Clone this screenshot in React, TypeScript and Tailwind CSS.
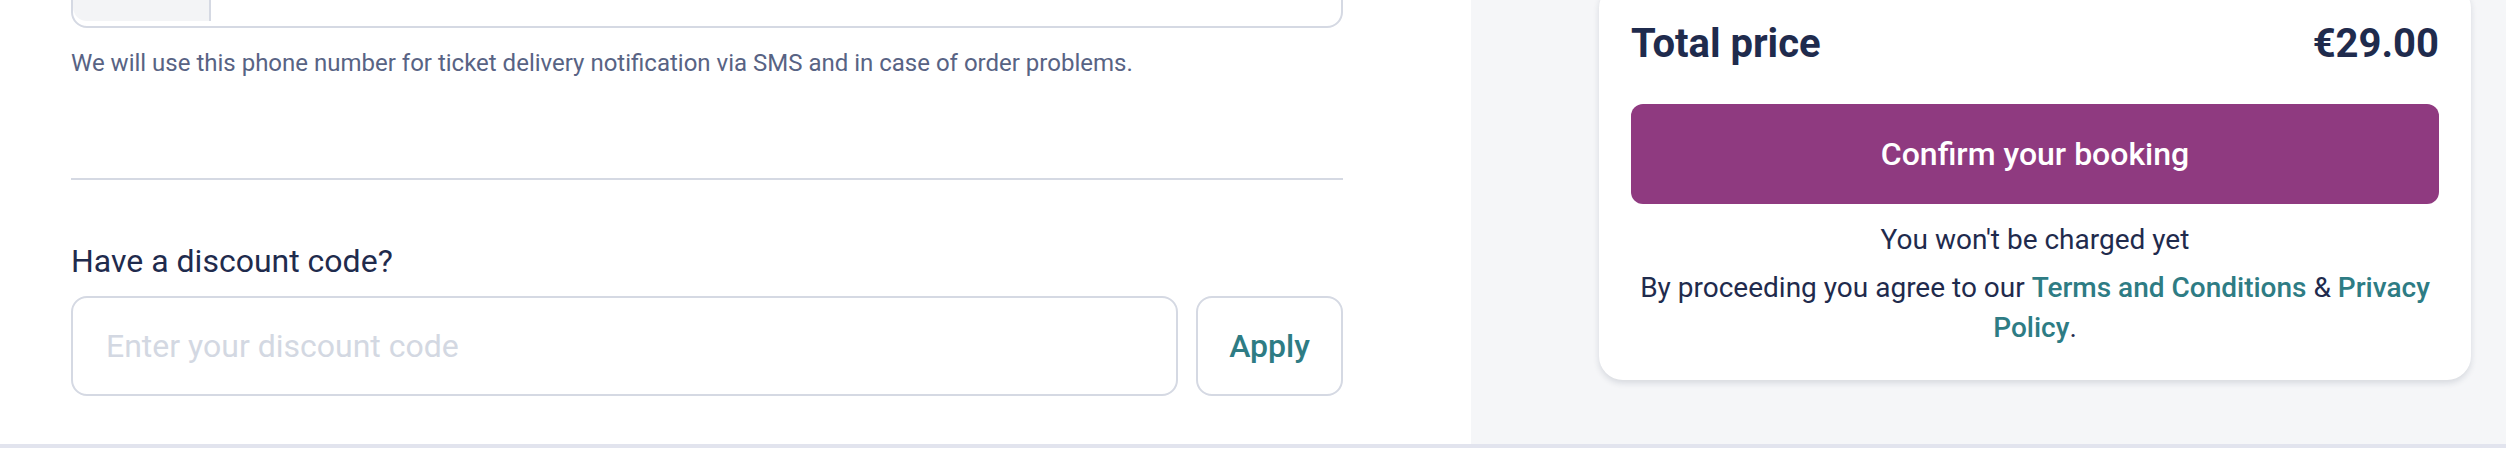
const App = () => {
  return (
    <div className="h-[468px] w-[2506px] overflow-hidden bg-white font-['Roboto',sans-serif]">
      <div className="-mt-[72px] flex border-b-4 border-[#e2e4ee]">
        {/* Left: form */}
        <div className="w-[1471px] shrink-0 pb-[48px] pl-[71px] pr-[128px]">
          {/* Phone input (cut off at top) */}
          <div className="flex h-[100px] rounded-[16px] border-2 border-[#d5d9e3]">
            <div className="h-[91px] w-[138px] rounded-l-[14px] border-r-2 border-[#d5d9e3] bg-[#f3f4f6]" />
          </div>
          <p className="mt-[19px] text-[24px] leading-[32px] text-[#586384]">
            We will use this phone number for ticket delivery notification via SMS and in case of order problems.
          </p>

          <div className="mt-[99px] h-[2px] bg-[#d5d9e3]" />

          <h3 className="mt-[57px] text-[32px] leading-[48px] text-[#1f2b4d]">Have a discount code?</h3>
          <div className="mt-[11px] flex gap-[18px]">
            <input
              type="text"
              placeholder="Enter your discount code"
              className="h-[100px] flex-1 rounded-[16px] border-2 border-[#d5d9e3] bg-white px-[33px] text-[32px] text-[#1f2b4d] outline-none placeholder:text-[#d3d8e2]"
            />
            <button className="h-[100px] w-[147px] rounded-[16px] border-2 border-[#d5d9e3] bg-white text-[32px] font-medium text-[#2e7c84]">
              Apply
            </button>
          </div>
        </div>

        {/* Right: summary */}
        <div className="flex-1 bg-[#f5f6f8] pl-[128px] pr-[35px] pt-[56px]">
          <div className="rounded-[24px] bg-white p-[32px] shadow-[0_3px_6px_rgba(30,40,70,0.14)]">
            <div className="flex items-center justify-between text-[40px] font-bold leading-[56px] text-[#1f2b4d]">
              <span>Total price</span>
              <span>€29.00</span>
            </div>
            <button className="mt-[32px] flex h-[100px] w-full items-center justify-center rounded-[12px] bg-[#8f3a80] text-[32px] font-medium text-white">
              Confirm your booking
            </button>
            <p className="mt-[16px] text-center text-[28px] leading-[40px] text-[#1f2b4d]">You won't be charged yet</p>
            <p className="mt-[8px] text-center text-[28px] leading-[40px] text-[#1f2b4d]">
              By proceeding you agree to our{' '}
              <a className="font-medium text-[#2e7c84]">Terms and Conditions</a> &amp;{' '}
              <a className="font-medium text-[#2e7c84]">Privacy Policy</a>.
            </p>
          </div>
        </div>
      </div>
    </div>
  );
};

export default App;
